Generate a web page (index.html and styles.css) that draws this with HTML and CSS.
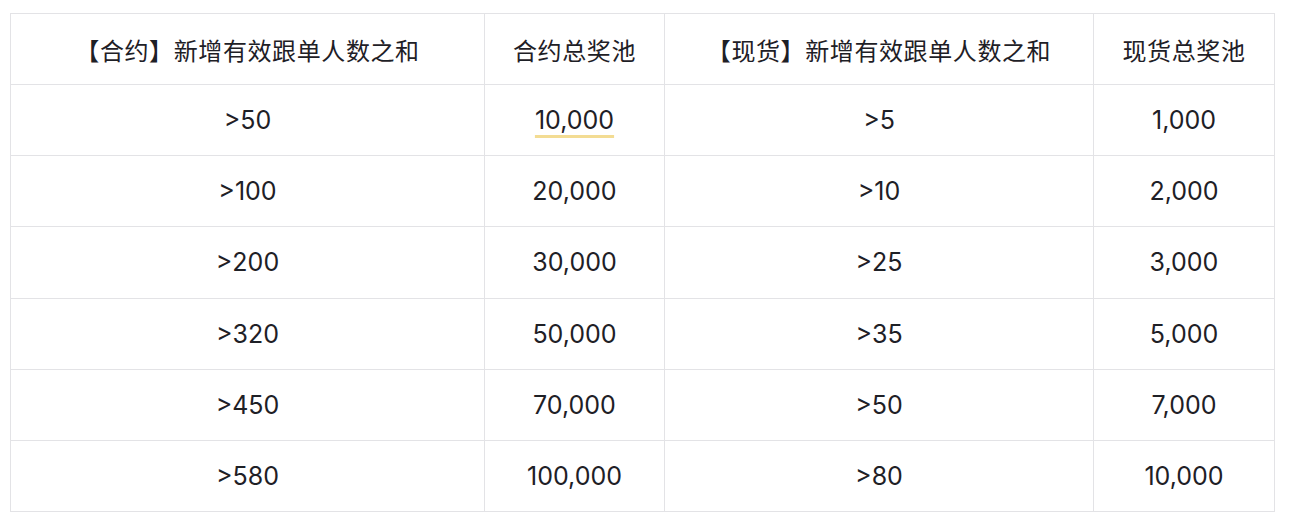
FILE: index.html
```html
<!DOCTYPE html>
<html lang="zh">
<head>
<meta charset="utf-8">
<link rel="stylesheet" href="styles.css">
</head>
<body>
<table class="pool">
  <colgroup>
    <col class="c1"><col class="c2"><col class="c3"><col class="c4">
  </colgroup>
  <thead>
    <tr><th>【合约】新增有效跟单人数之和</th><th>合约总奖池</th><th>【现货】新增有效跟单人数之和</th><th>现货总奖池</th></tr>
  </thead>
  <tbody>
    <tr><td>&gt;50</td><td><span class="mark">10,000</span></td><td>&gt;5</td><td>1,000</td></tr>
    <tr><td>&gt;100</td><td>20,000</td><td>&gt;10</td><td>2,000</td></tr>
    <tr><td>&gt;200</td><td>30,000</td><td>&gt;25</td><td>3,000</td></tr>
    <tr><td>&gt;320</td><td>50,000</td><td>&gt;35</td><td>5,000</td></tr>
    <tr><td>&gt;450</td><td>70,000</td><td>&gt;50</td><td>7,000</td></tr>
    <tr><td>&gt;580</td><td>100,000</td><td>&gt;80</td><td>10,000</td></tr>
  </tbody>
</table>
</body>
</html>
```
FILE: styles.css
```css
html, body { margin: 0; padding: 0; background: #ffffff; }
body { padding: 13px 0 0 10px; }
.pool {
  border-collapse: collapse;
  table-layout: fixed;
  width: 1264px;
  font-family: Inter, "Noto Sans CJK SC", sans-serif;
  font-size: 25px;
  color: #1e2026;
}
.pool th {
  font-size: 24px;
  letter-spacing: 0.6px;
}
.c1 { width: 474px; }
.c2 { width: 180px; }
.c3 { width: 429px; }
.c4 { width: 181px; }
.pool th, .pool td {
  border: 1px solid #e3e3e6;
  height: 70.15px;
  padding: 0;
  text-align: center;
  vertical-align: middle;
  font-weight: 400;
}
.mark {
  text-decoration: underline;
  text-decoration-color: #f3dc93;
  text-decoration-thickness: 3px;
  text-underline-offset: 6px;
}
```
